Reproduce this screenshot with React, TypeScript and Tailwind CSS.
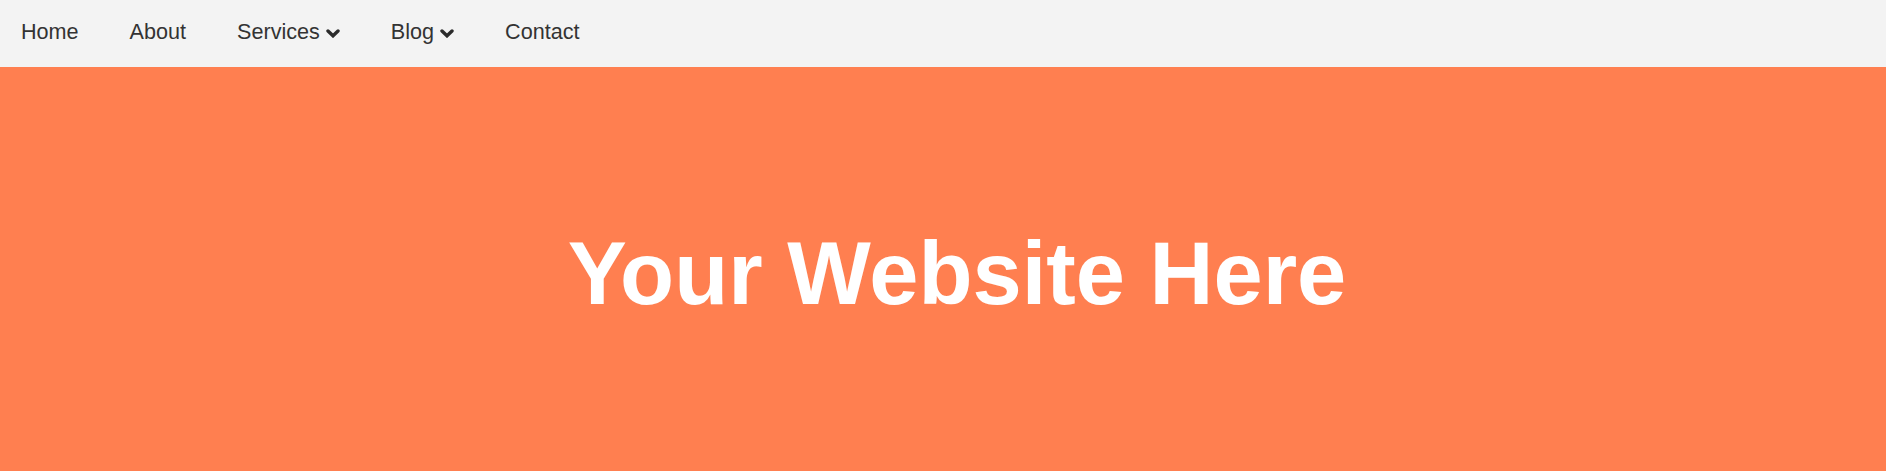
const links = [
  { label: "Home" },
  { label: "About" },
  { label: "Services", dropdown: true },
  { label: "Blog", dropdown: true },
  { label: "Contact" },
];

function Chevron() {
  return (
    <svg viewBox="0 0 14 9" className="w-[14px] h-[9px] mt-[2px]" fill="none">
      <path d="M2 2 L7 6.8 L12 2" stroke="#2b2b2b" strokeWidth="3.4" strokeLinecap="round" strokeLinejoin="miter" />
    </svg>
  );
}

export default function App() {
  return (
    <div className="min-h-screen font-['Liberation_Sans',Arial,sans-serif]">
      {/* Top navigation */}
      <nav className="h-[67px] bg-[#f3f3f3]">
        <ul className="flex gap-[51px] pl-[21px] pt-[19px]">
          {links.map((l) => (
            <li key={l.label}>
              <a href="#" className="flex items-center gap-[6px] text-[21.6px] leading-[normal] text-[#333333]">
                {l.label}
                {l.dropdown && <Chevron />}
              </a>
            </li>
          ))}
        </ul>
      </nav>

      {/* Hero */}
      <header className="h-[404px] bg-[#ff7f50] flex items-center justify-center pt-[11px] pl-[28px]">
        <h1 className="text-[88.5px] leading-none font-bold text-white">Your Website Here</h1>
      </header>
    </div>
  );
}
